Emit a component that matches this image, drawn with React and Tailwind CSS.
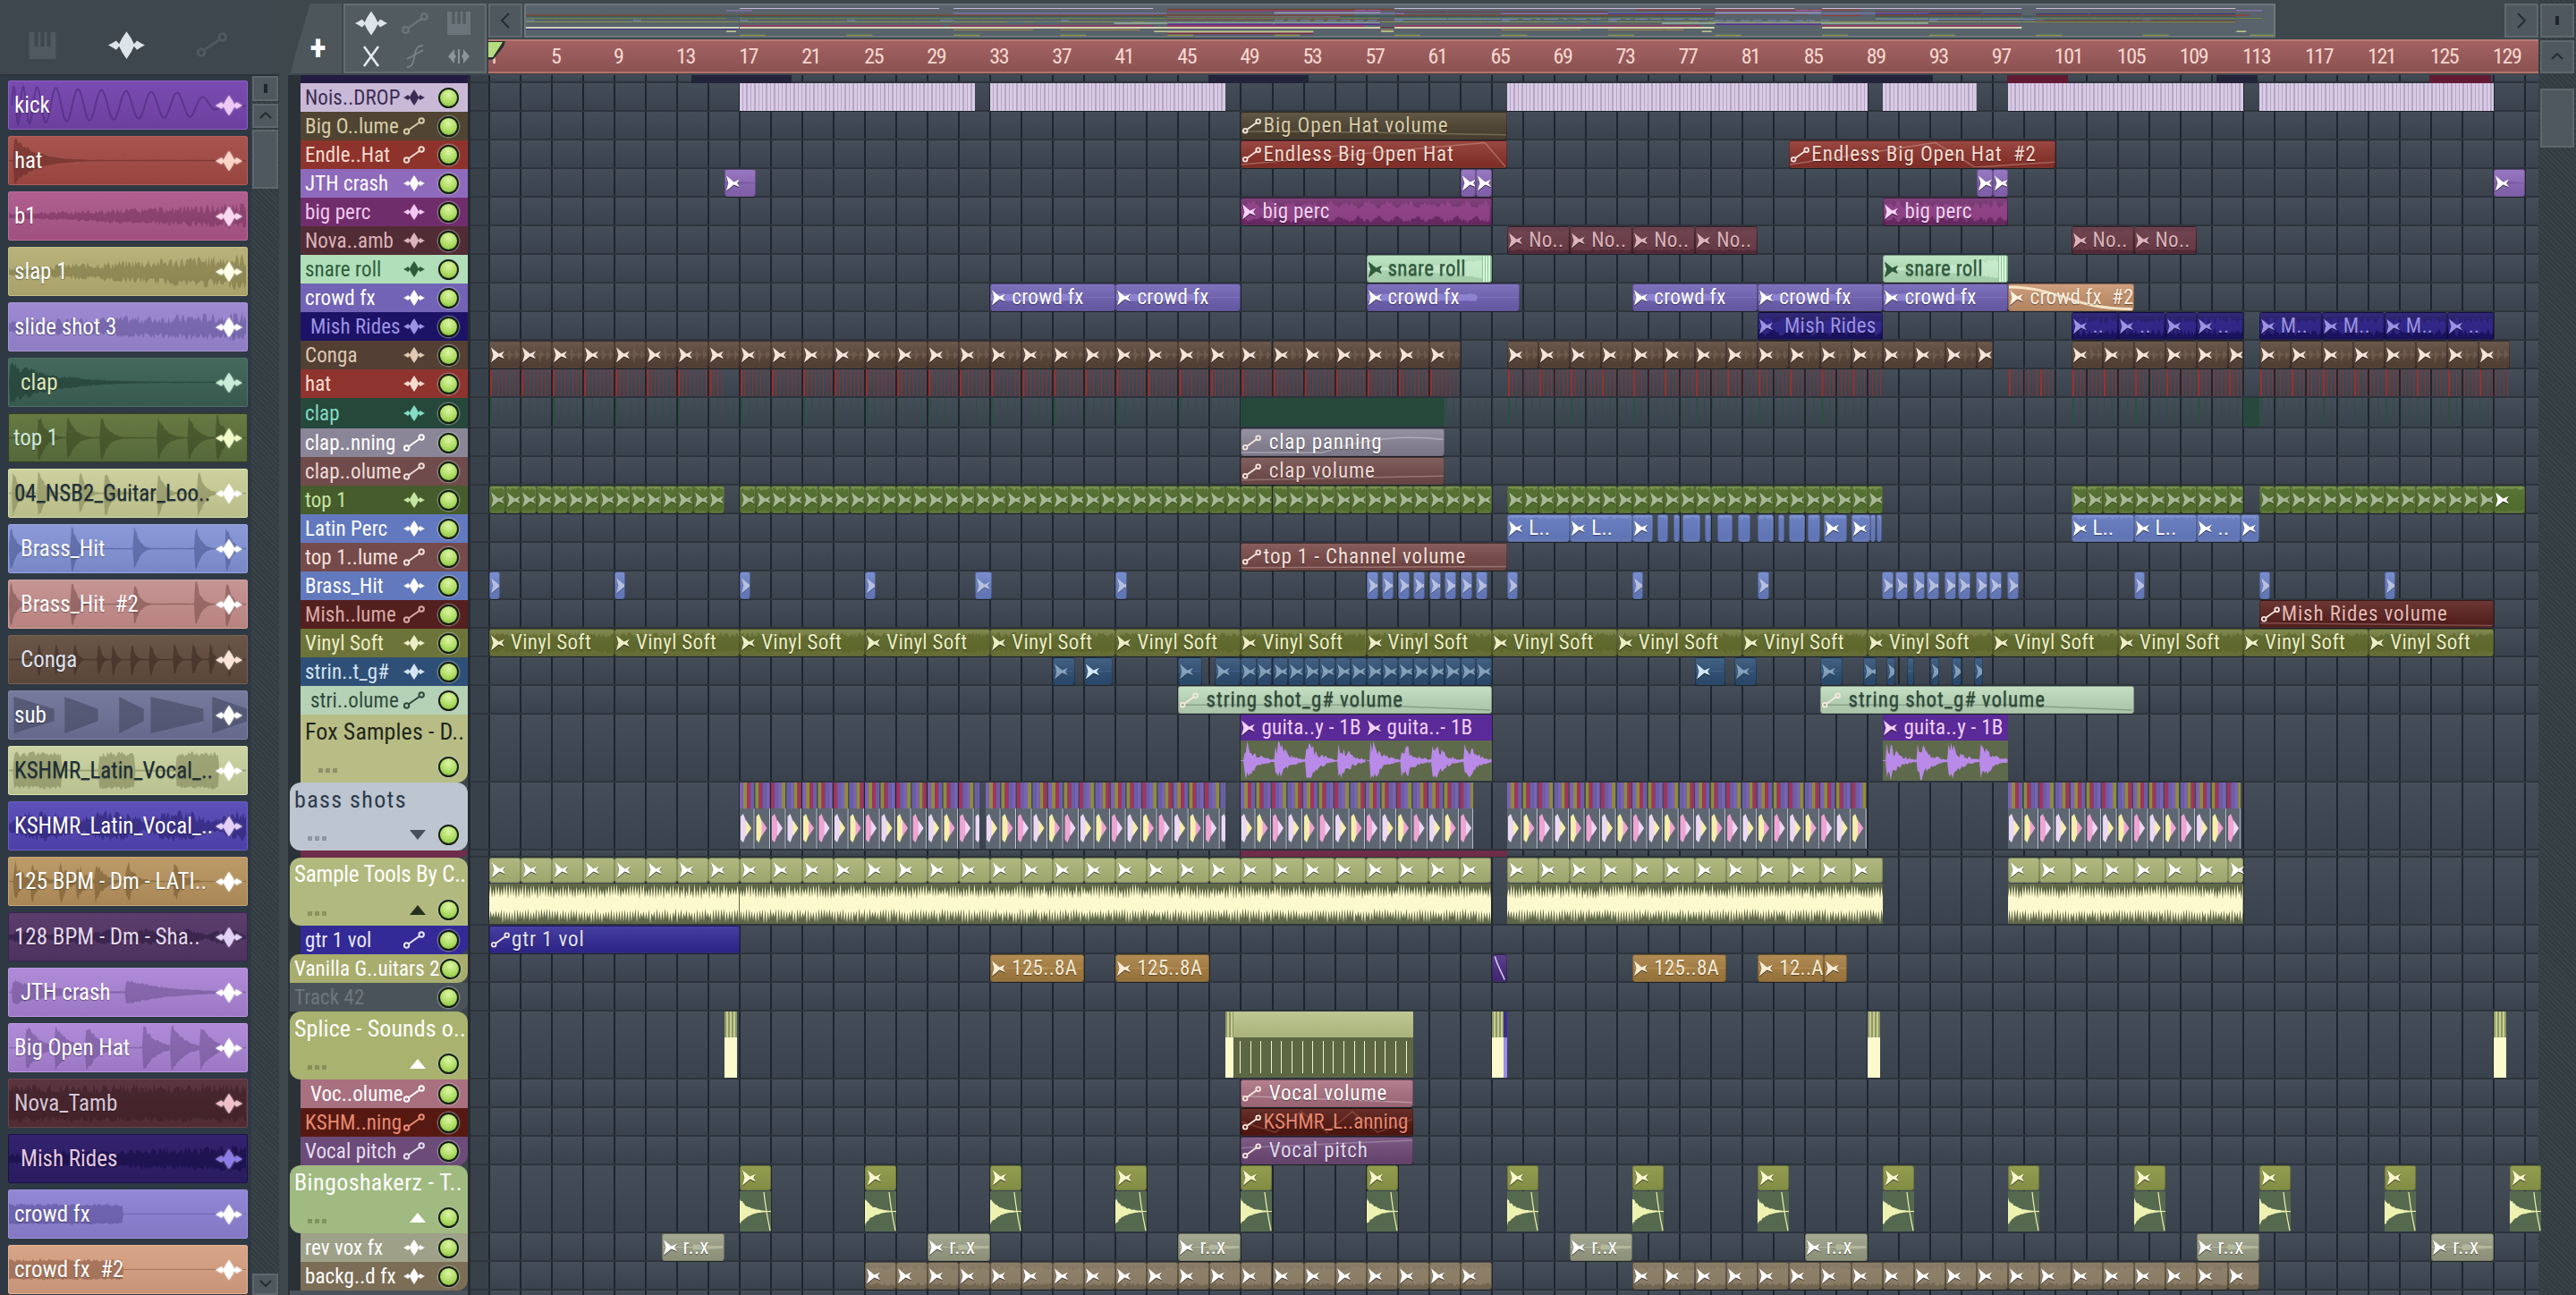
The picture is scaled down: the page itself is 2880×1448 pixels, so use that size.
// FL Studio style playlist window
import React from "react";

const BAR = 17.51;
const GRID =
  "bg-[repeating-linear-gradient(90deg,#1e252d_0,#1e252d_2px,transparent_2px,transparent_35.02px),linear-gradient(#444d58,#3a434d)]";

const rng = (seed) => {
  let s = seed * 9301 + 49297;
  return () => {
    s = (s * 9301 + 49297) % 233280;
    return s / 233280;
  };
};

const seq = (a, b, step, label) => {
  const out = [];
  for (let x = a; x < b; x += step) out.push([x, Math.min(x + step, b), label]);
  return out;
};

// envelope helpers for the little wave forms
const hits = (list, d = 0.05, amp = 1) => (t) => {
  let m = 0.03;
  for (const p of list) if (t >= p - 0.008) m = Math.max(m, amp * Math.exp(-Math.max(t - p, 0) / d));
  return Math.min(m, 1);
};
const flat = (amp) => () => amp;
const blob = (end, amp) => (t) => (t < end ? amp : 0.02);
// every other sample reaches for the edge, the rest stay in the solid middle
const spiky = (seed) => {
  const r = rng(seed);
  let i = 0;
  return () => {
    i += 1;
    return i % 4 < 2 ? 0.22 + 0.22 * r() : 0.68 + 0.32 * r();
  };
};

function wavePath(w, h, env, seed, step = 1.5, jag = 0.28) {
  const r = rng(seed);
  const top = [];
  const bot = [];
  for (let x = 0; x <= w; x += step) {
    const a = env(x / w) * (h / 2) * (1 - jag + jag * r());
    top.push(`${x.toFixed(1)} ${(h / 2 - a).toFixed(1)}`);
    const b = env(x / w) * (h / 2) * (1 - jag * 0.7 + jag * 0.7 * r());
    bot.unshift(`${x.toFixed(1)} ${(h / 2 + b).toFixed(1)}`);
  }
  return `M${top.join("L")}L${bot.join("L")}Z`;
}

function Wave({ w, h, env, seed, className, step, jag }) {
  return (
    <svg className={`absolute inset-0 h-full w-full ${className}`} viewBox={`0 0 ${w} ${h}`} preserveAspectRatio="none">
      <path d={wavePath(w, h, env, seed, step, jag)} fill="currentColor" />
    </svg>
  );
}

function WaveIcon({ className = "" }) {
  return (
    <svg className={className} viewBox="0 0 32 24" fill="currentColor">
      <path d="M0 12 3 10.5 7 8 9.5 11 12 6 16 0 20 6 22.5 11 25 8 29 10.5 32 12 29 13.5 25 16 22.5 13 20 18 16 24 12 18 9.5 13 7 16 3 13.5Z" />
    </svg>
  );
}

function NodeIcon({ className = "" }) {
  return (
    <svg className={className} viewBox="0 0 24 20" fill="none" stroke="currentColor" strokeWidth="2">
      <circle cx="3.6" cy="16" r="2.7" />
      <circle cx="20.2" cy="4" r="2.7" />
      <path d="M6 14.2 18 5.8" />
    </svg>
  );
}

function ClipIcon({ className = "" }) {
  return (
    <svg className={`h-[18px] w-[16px] shrink-0 drop-shadow-[0_1px_0_rgba(0,0,0,.6)] ${className}`} viewBox="0 0 15 16" fill="currentColor">
      <path d="M0 0 8 6.5 14 4 11.5 8 14 12 8 9.5 0 16 2.2 8Z" />
    </svg>
  );
}

function PianoIcon({ className = "" }) {
  return (
    <svg className={className} viewBox="0 0 30 30" fill="currentColor">
      <path d="M0 0H6V16H10V0H13V16H17V0H20V16H24V0H30V30H0Z" />
    </svg>
  );
}

function Led() {
  return (
    <div className="h-[23px] w-[23px] shrink-0 rounded-full border-2 border-[#161f12] bg-[radial-gradient(circle_at_50%_30%,#dcf5a4,#aedc62_55%,#79b23e)] shadow-[0_0_0_1.5px_rgba(190,200,190,.4)]" />
  );
}

const channels = [
  { name: "kick", pad: "pl-[6px]", bg: "from-[#7a4cb2] to-[#6c3f9e]", border: "border-[#8a62c0]", fg: "text-white", wv: "text-[#4a2a78]/60", icon: "text-[#f0c8f8]", kind: "sine" },
  { name: "hat", pad: "pl-[6px]", bg: "from-[#a85550] to-[#984540]", border: "border-[#b3605a]", fg: "text-white", wv: "text-[#5e2522]/50", icon: "text-[#fcd4c8]", env: hits([0.03], 0.09) },
  { name: "b1", pad: "pl-[6px]", bg: "from-[#b0608f] to-[#a0507e]", border: "border-[#bc6c9b]", fg: "text-white", wv: "text-[#6e2c55]/50", icon: "text-[#fcd8f0]", env: (t) => 0.12 + 0.45 * t, jag: 0.8 },
  { name: "slap 1", pad: "pl-[6px]", bg: "from-[#b9b27a] to-[#a8a169]", border: "border-[#c4bd85]", fg: "text-white", wv: "text-[#5e5a30]/40", icon: "text-[#fffce8]", env: (t) => 0.2 + 0.6 * t, jag: 0.8 },
  { name: "slide shot 3", pad: "pl-[6px]", bg: "from-[#9d8ad2] to-[#8e7cc4]", border: "border-[#a898da]", fg: "text-white", wv: "text-[#4c3f80]/40", icon: "text-white", env: (t) => 0.3 + 0.35 * t, jag: 0.8 },
  { name: "clap", pad: "pl-[13px]", bg: "from-[#44695c] to-[#38594e]", border: "border-[#4d7366]", fg: "text-[#dfe6b8]", wv: "text-[#1e3a32]/60", icon: "text-[#c8ecd8]", env: hits([0.01], 0.18), jag: 0.5 },
  { name: "top 1", pad: "pl-[5px]", bg: "from-[#677a43] to-[#55683a]", border: "border-[#33401f]", fg: "text-[#cfeadb]", wv: "text-[#333f1c]/50", icon: "text-[#f0fcc8]", env: hits([0.13, 0.25, 0.39, 0.63, 0.76, 0.88], 0.03) },
  { name: "04_NSB2_Guitar_Loo..", pad: "pl-[6px]", bg: "from-[#cdd19d] to-[#b9bd89]", border: "border-[#d8dcaa]", fg: "text-[#1f2f3a]", wv: "text-[#75784e]/50", icon: "text-white", env: hits([0.02, 0.13, 0.3, 0.41, 0.63, 0.8], 0.025) },
  { name: "Brass_Hit", pad: "pl-[13px]", bg: "from-[#8b99d9] to-[#7888c7]", border: "border-[#98a5e0]", fg: "text-white", wv: "text-[#404d85]/50", icon: "text-white", env: hits([0.01, 0.27, 0.53, 0.79, 0.92], 0.02) },
  { name: "Brass_Hit  #2", pad: "pl-[13px]", bg: "from-[#c59594] to-[#b8827f]", border: "border-[#d0a2a0]", fg: "text-white", wv: "text-[#6e4342]/50", icon: "text-white", env: hits([0.01, 0.27, 0.53, 0.79, 0.92], 0.02) },
  { name: "Conga", pad: "pl-[13px]", bg: "from-[#6a5548] to-[#5a463a]", border: "border-[#75604f]", fg: "text-[#dfe2ee]", wv: "text-[#33241c]/50", icon: "text-[#fce4d8]", env: hits([0.13, 0.2, 0.28, 0.38, 0.44, 0.52, 0.6, 0.7, 0.78, 0.85, 0.93], 0.012, 0.7) },
  { name: "sub", pad: "pl-[6px]", bg: "from-[#767b9d] to-[#66698c]", border: "border-[#8286a8]", fg: "text-white", wv: "text-[#444760]/60", icon: "text-white", kind: "sub" },
  { name: "KSHMR_Latin_Vocal_..", pad: "pl-[6px]", bg: "from-[#ccd4a4] to-[#b9c190]", border: "border-[#d6dcb0]", fg: "text-[#1d2e36]", wv: "text-[#75784e]/50", icon: "text-white", env: (t) => ((t > 0.02 && t < 0.22) || (t > 0.38 && t < 0.53) || (t > 0.7 && t < 0.88) ? 0.8 : 0.04) },
  { name: "KSHMR_Latin_Vocal_..", pad: "pl-[6px]", bg: "from-[#5d51b9] to-[#4c40a8]", border: "border-[#6a5ec4]", fg: "text-white", wv: "text-[#2a2070]/60", icon: "text-[#e2d0f8]", env: (t) => 0.25 + 0.45 * Math.abs(Math.sin(t * 11)), jag: 0.7 },
  { name: "125 BPM - Dm - LATI..", pad: "pl-[6px]", bg: "from-[#bc9b69] to-[#a88656]", border: "border-[#c7a676]", fg: "text-white", wv: "text-[#6a5028]/50", icon: "text-white", env: hits([0.03, 0.1, 0.22, 0.29, 0.37, 0.5, 0.7], 0.035, 0.95), jag: 0.6 },
  { name: "128 BPM - Dm - Sha..", pad: "pl-[6px]", bg: "from-[#5c3e6d] to-[#4d3260]", border: "border-[#3c2450]", fg: "text-[#e6d8ee]", wv: "text-[#2c1a40]/60", icon: "text-[#e2d0f8]", env: (t) => 0.1 + 0.25 * Math.abs(Math.sin(t * 19)), jag: 0.6 },
  { name: "JTH crash", pad: "pl-[13px]", bg: "from-[#b08bd9] to-[#9c78c4]", border: "border-[#bb98e0]", fg: "text-white", wv: "text-[#654a88]/50", icon: "text-white", env: hits([0.02, 0.5], 0.18, 0.55) },
  { name: "Big Open Hat", pad: "pl-[6px]", bg: "from-[#b08bd9] to-[#9c78c4]", border: "border-[#bb98e0]", fg: "text-white", wv: "text-[#654a88]/50", icon: "text-white", env: hits([0.08, 0.2, 0.33, 0.57, 0.69, 0.81], 0.05) },
  { name: "Nova_Tamb", pad: "pl-[6px]", bg: "from-[#5b3540] to-[#512b34]", border: "border-[#6a434e]", fg: "text-[#d8c6d8]", wv: "text-[#2e141a]/40", icon: "text-[#f0c0c8]", env: flat(0.82), jag: 0.5 },
  { name: "Mish Rides", pad: "pl-[13px]", bg: "from-[#33236f] to-[#2a1c60]", border: "border-[#1c1048]", fg: "text-[#e4c8e0]", wv: "text-[#180e48]/70", icon: "text-[#8c7ce8]", env: (t) => 0.25 + 0.35 * t, jag: 0.7 },
  { name: "crowd fx", pad: "pl-[6px]", bg: "from-[#9187d5] to-[#8478c4]", border: "border-[#9e95de]", fg: "text-white", wv: "text-[#4f4690]/50", icon: "text-white", env: blob(0.48, 0.45) },
  { name: "crowd fx  #2", pad: "pl-[6px]", bg: "from-[#d8a588] to-[#c89478]", border: "border-[#e4b295]", fg: "text-white", wv: "text-[#8a5a42]/60", icon: "text-white", env: blob(0.48, 0.45) },
];

function sinePath() {
  let d = "M2 27";
  let phase = 0;
  for (let x = 3; x <= 268; x += 1) {
    phase += 0.2 + 0.08 * Math.exp(-x / 100) + 0.6 * Math.exp(-x / 15);
    const amp = 22 * Math.exp(-x / 420) * (x > 205 ? Math.max(0.1, 1 - (x - 205) / 50) : 1);
    d += `L${x} ${(27 - amp * Math.sin(phase)).toFixed(1)}`;
  }
  return d;
}
function subPath() {
  const blocks = [[4, 50], [62, 100], [124, 152], [160, 220], [230, 270]];
  let d = "";
  blocks.forEach(([a, b]) => {
    d += `M${a} 6 L${b} 20 L${b} 34 L${a} 48Z`;
  });
  return d;
}

function ChannelCell({ c, i }) {
  return (
    <div className={`relative flex h-[55px] w-[268px] shrink-0 items-center overflow-hidden rounded-[2px] border bg-linear-to-b ${c.bg} ${c.border} ${c.pad}`}>
      {c.kind === "sine" && (
        <svg className={`absolute inset-0 h-full w-full ${c.wv}`} viewBox="0 0 268 54" fill="none" stroke="currentColor" strokeWidth="2">
          <path d={sinePath()} />
        </svg>
      )}
      {c.kind === "sub" && (
        <svg className={`absolute inset-0 h-full w-full ${c.wv}`} viewBox="0 0 268 54" fill="currentColor">
          <path d={subPath()} />
        </svg>
      )}
      {c.env && <Wave w={268} h={54} env={c.env} seed={i + 3} className={c.wv} jag={c.jag} />}
      <span className={`relative whitespace-pre text-[25px] leading-none [text-shadow:0_1px_1px_rgba(0,0,0,.35)] ${c.fg}`}>{c.name}</span>
      <WaveIcon className={`absolute right-[5px] top-[15px] h-[24px] w-[30px] drop-shadow-[0_0_1px_rgba(255,255,255,.6)] ${c.icon}`} />
    </div>
  );
}

const LATIN = [[66, 70, "L.."], [70, 74, "L.."], [74, 75.3], [75.6, 76.3], [76.6, 77], [77.2, 78.3], [78.6, 79], [79.4, 80.4], [80.7, 81.5], [82, 83], [83.3, 83.7], [84, 85], [85.2, 86], [86.2, 87.7], [88, 89.2], [89.2, 89.5], [89.6, 89.9], [102, 106, "L.."], [106, 110, "L.."], [110, 112.8, ".."], [112.8, 114]];
const BRASS = [[1, 1.7], [9, 9.7], [17, 17.7], [25, 25.7], [32, 33.1], [41, 41.7], ...seq(57, 65, 1).map(([a]) => [a, a + 0.75]), [66, 66.7], [74, 74.7], [82, 82.7], ...[89.9, 90.8, 91.9, 92.8, 93.9, 94.8, 95.9, 96.8, 97.9].map((a) => [a, a + 0.75]), [106, 106.7], [114, 114.7], [122, 122.7]];

const tracks = [
  { h: 9, name: "", bg: "bg-[#221d40]", kind: "sliver", ov: "#2a2a4a" },
  { h: 32, name: "Nois..DROP", bg: "bg-[#c9b9d7]", fg: "text-[#3a2c52]", kind: "stripe", ov: "#c9b9d7", clips: [[17, 32], [33, 48], [66, 89], [90, 96], [98, 113], [114, 129]] },
  { h: 32, name: "Big O..lume", node: 1, bg: "bg-[#4f4532]", fg: "text-[#d9cca8]", clip: "bg-[#4f4532]", cfg: "text-[#d9cca8]", ov: "#4f4532", clips: [[49, 66, "Big Open Hat volume", "M0 72 L20 72 L100 85"]] },
  { h: 32, name: "Endle..Hat", node: 1, bg: "bg-[#8e332c]", fg: "text-[#f4dbcf]", clip: "bg-[#8e332c]", cfg: "text-[#f4dbcf]", ov: "#a03a32", clips: [[49, 66, "Endless Big Open Hat", "M0 90 L92 5 L100 100"], [84, 101, "Endless Big Open Hat  #2", "M0 90 L55 5 L70 100 L100 80"]] },
  { h: 32, name: "JTH crash", bg: "bg-[#8e6abc]", fg: "text-white", clip: "bg-[#8e6abc]", cfg: "text-white", wv: "text-[#6a4a94]/50", env: hits([0.05], 0.4, 0.35), ov: "#9b78c8", clips: [[16, 18], [63, 64], [64, 65], [96, 97], [97, 98], [129, 131]] },
  { h: 32, name: "big perc", bg: "bg-[#702d6b]", fg: "text-[#f2c8f2]", clip: "bg-[#702d6b]", cfg: "text-[#f7d4f7]", wv: "text-[#9a4a92]/70", env: (t) => 0.4 + 0.5 * Math.abs(Math.sin(t * 40)), jag: 0.5, ov: "#8a3a84", clips: [[49, 65, "big perc"], [90, 98, "big perc"]] },
  { h: 32, name: "Nova..amb", bg: "bg-[#512c35]", fg: "text-[#dcb3ba]", clip: "bg-[#5a2f3b]", cfg: "text-[#dcb3ba]", wv: "text-[#7a4a56]/50", env: flat(0.85), ov: "#6e3a48", clips: [...seq(66, 82, 4, "No.."), ...seq(102, 110, 4, "No..")] },
  { h: 32, name: "snare roll", bg: "bg-[#b1dfb9]", fg: "text-[#2e5b3c]", clip: "bg-[#b5e3bd]", cfg: "text-[#2e5b3c]", wv: "text-[#d4f4d8]/60", env: (t) => 0.1 + 0.8 * t * t, ov: "#b1dfb9", clips: [[57, 65, "snare roll"], [90, 98, "snare roll"]], endStripe: 1 },
  { h: 32, name: "crowd fx", bg: "bg-[#7263b6]", fg: "text-white", clip: "bg-[#7263b6]", cfg: "text-white", wv: "text-[#9a8ee0]/70", env: blob(0.72, 0.3), ov: "#8a7cd0", clips: [[33, 41, "crowd fx"], [41, 49, "crowd fx"], [57, 66.8, "crowd fx"], [74, 82, "crowd fx"], [82, 90, "crowd fx"], [90, 98, "crowd fx"], [98, 106, "crowd fx  #2", null, 1]] },
  { h: 32, name: "Mish Rides", pad: "pl-[11px]", bg: "bg-[#1c1367]", fg: "text-[#9c92e4]", clip: "bg-[#1c1367]", cfg: "text-[#9c92e4]", wv: "text-[#352a90]/80", env: (t) => 0.3 + 0.5 * Math.abs(Math.sin(t * 25)), jag: 0.6, ov: "#2a2090", clips: [[82, 90, " Mish Rides"], [102, 105, ".."], [105, 108, ".."], [108, 110], [110, 113, ".."], [114, 118, "M.."], [118, 122, "M.."], [122, 126, "M.."], [126, 129, ".."]] },
  { h: 32, name: "Conga", bg: "bg-[#533f33]", fg: "text-[#dfc9b4]", clip: "bg-[#5a463a]", cfg: "text-[#f6e4d8]", wv: "text-[#7a6656]/60", env: hits([0.15, 0.4, 0.62, 0.85], 0.06, 0.8), jag: 0.6, ov: "#6a5548", clips: [...seq(1, 63, 2), ...seq(66, 96, 2), [96, 97], ...seq(102, 112, 2), [112, 113], ...seq(114, 130, 2)] },
  { h: 32, name: "hat", bg: "bg-[#8e332e]", fg: "text-[#f8dcd0]", kind: "lines", lineColor: "#a22f2a", gap: 4.38, ov: "#a03a32", clips: [[1, 16], [17, 63], [66, 90], [98, 101], [102, 113], [114, 130]] },
  { h: 34, name: "clap", bg: "bg-[#25483b]", fg: "text-[#84dcc4]", kind: "lines", lineColor: "#27543f", gap: 8.76, ov: "#2e5a46", clips: [[1, 49], [49, 62, null, "solid"], [62, 90], [102, 113], [113, 114, null, "solid"], [114, 129]] },
  { h: 32, name: "clap..nning", node: 1, bg: "bg-[#8b8697]", fg: "text-white", clip: "bg-[#8b8697]", cfg: "text-white", ov: "#8b8697", clips: [[49, 62, " clap panning", "M0 90 L40 90 Q70 10 100 40"]] },
  { h: 32, name: "clap..olume", node: 1, bg: "bg-[#6f4b4b]", fg: "text-[#f0dcd8]", clip: "bg-[#754e4e]", cfg: "text-[#f0dcd8]", ov: "#754e4e", clips: [[49, 62, " clap volume", "M0 85 L100 70"]] },
  { h: 32, name: "top 1", bg: "bg-[#465c2c]", fg: "text-[#c6e4a4]", clip: "bg-[#6a8640]", cfg: "text-white", wv: "text-[#4a6828]/70", env: flat(0.95), faint: 1, ov: "#6a8640", clips: [...seq(1, 16, 1), ...seq(17, 65, 1), ...seq(66, 90, 1), ...seq(102, 113, 1), ...seq(114, 129, 1), [129, 131]] },
  { h: 32, name: "Latin Perc", bg: "bg-[#6279bf]", fg: "text-white", clip: "bg-[#7287cb]", cfg: "text-white", wv: "text-[#5a70b4]/50", env: flat(0.9), iconMin: 20.5, ov: "#7287cb", clips: LATIN },
  { h: 32, name: "top 1..lume", node: 1, bg: "bg-[#754a4a]", fg: "text-[#f4e0dc]", clip: "bg-[#7a4c4a]", cfg: "text-[#f4e0dc]", ov: "#7a4c4a", clips: [[49, 66, "top 1 - Channel volume", "M0 92 L100 88"]] },
  { h: 32, name: "Brass_Hit", bg: "bg-[#6279bd]", fg: "text-white", clip: "bg-[#6c82c8]", cfg: "text-white", faint: 1, ov: "#7287cb", clips: BRASS },
  { h: 32, name: "Mish..lume", node: 1, bg: "bg-[#54201f]", fg: "text-[#d8aaa8]", clip: "bg-[#5c2320]", cfg: "text-[#e6bab4]", ov: "#6a2a28", clips: [[114, 129, "Mish Rides volume", "M0 85 L100 95"]] },
  { h: 32, name: "Vinyl Soft", bg: "bg-[#6d743a]", fg: "text-[#eceec4]", clip: "bg-[#727b3c]", cfg: "text-[#eceec4]", wv: "text-[#5a6428]/70", env: flat(0.8), jag: 0.5, ov: "#8d964e", clips: seq(1, 129, 8, "Vinyl Soft") },
  { h: 32, name: "strin..t_g#", bg: "bg-[#2f5076]", fg: "text-[#d4e4f4]", clip: "bg-[#2f5076]", cfg: "text-[#cfe8f8]", wv: "text-[#4a6c98]/60", env: hits([0.02], 0.35, 0.2), faint: 1, ov: "#3f6490", clips: [[37, 38.4], [39, 40.8], [45, 46.5], [47.3, 49], ...seq(49, 65, 1), [78, 79.9], [80.5, 81.9], [86, 87.4], [88.7, 89.6], [90.2, 90.8], [91.5, 92], [93, 93.6], [94.4, 95], [95.8, 96.4]] },
  { h: 32, name: "stri..olume", node: 1, pad: "pl-[11px]", bg: "bg-[#b5d1b6]", fg: "text-[#2e4b3a]", clip: "bg-[#bfdcbe]", cfg: "text-[#2e4b3a]", ov: "#bfdcbe", clips: [[45, 65, " string shot_g# volume", "M0 70 L60 70 L100 90"], [86, 106, " string shot_g# volume", "M0 70 L60 70 L100 90"]] },
  { h: 76, name: "Fox Samples - D..", group: 0, tall: "guitar", bg: "bg-[#b8bd86]", fg: "text-[#1f2618]", shape: "rounded-br-[12px]", dots: "bg-[#8d926a]", ov: "#5a2a98", clips: [[49, 57, "guita..y - 1B"], [57, 65, "guita..- 1B"], [90, 98, "guita..y - 1B"]] },
  { h: 76, name: "bass shots", group: 1, tall: "bass", tri: "down", title: "text-[26px] tracking-[1.4px]", bg: "bg-[#bcc5d0]", fg: "text-[#2d3a4b]", shape: "rounded-[12px]", dots: "bg-[#8f97a2]", triC: "border-t-[#44505c]", ov: "#a2345e", clips: [[17, 32.3], [32.7, 48], [49, 63.8], [66, 89], [98, 112.8]] },
  { h: 8, name: "", bg: "bg-[#6e2d49]", shape: "rounded-br-[8px]", clip: "bg-[#6e2d49]", ov: "#6e2d49", clips: [[49, 66]], thin: 1 },
  { h: 76, name: "Sample Tools By C..", group: 1, tall: "sample", tri: "up", title: "text-[25px] tracking-[-0.2px]", bg: "bg-[#b2b97e]", fg: "text-white", shape: "rounded-t-[12px] rounded-bl-[12px]", dots: "bg-[#8c9360]", triC: "border-b-[#26301e]", ov: "#fbf8c8", clips: [[1, 17], [17, 65], [66, 90], [98, 113]] },
  { h: 32, name: "gtr 1 vol", node: 1, bg: "bg-[#332a97]", fg: "text-[#e8e8f4]", shape: "rounded-br-[10px]", clip: "bg-[#332a97]", cfg: "text-[#e4e4f4]", ov: "#332a97", clips: [[1, 17, "gtr 1 vol"]] },
  { h: 32, name: "Vanilla G..uitars 2", group: 1, bg: "bg-[#a8ad6d]", fg: "text-white", shape: "rounded-tl-[10px] rounded-br-[12px]", clip: "bg-[#a87f42]", cfg: "text-[#f8ecd4]", wv: "text-[#c49e64]/60", env: hits([0.4], 0.1, 0.7), ov: "#b08848", clips: [[33, 39, "125..8A"], [41, 47, "125..8A"], [65, 66, null, null, 2], [74, 80, "125..8A"], [82, 86.2, "12..A"], [86.2, 87.7]] },
  { h: 32, name: "Track 42", group: 1, bg: "bg-[#4b535a]", fg: "text-[#6d777d]", shape: "rounded-br-[12px]", clips: [] },
  { h: 76, name: "Splice - Sounds o..", group: 1, tall: "splice", tri: "up", bg: "bg-[#a9b26f]", fg: "text-white", shape: "rounded-t-[12px] rounded-bl-[12px]", dots: "bg-[#85905a]", triC: "border-b-white", ov: "#c6cc94", clips: [[16, 16.8], [48, 60], [65, 66], [89, 89.8], [129, 129.8]] },
  { h: 32, name: "Voc..olume", node: 1, pad: "pl-[11px]", bg: "bg-[#a9707f]", fg: "text-white", clip: "bg-[#ad7282]", cfg: "text-white", ov: "#ad7282", clips: [[49, 60, " Vocal volume", "M0 60 L100 85"]] },
  { h: 32, name: "KSHM..ning", node: 1, tight: 1, bg: "bg-[#561912]", fg: "text-[#e88a72]", clip: "bg-[#561912]", cfg: "text-[#e78870]", ov: "#7a2a22", clips: [[49, 60, "KSHMR_L..anning", "M0 50 L20 90 L35 10 L50 90 L65 10 L80 90 L100 40"]] },
  { h: 32, name: "Vocal pitch", node: 1, bg: "bg-[#6c4b79]", fg: "text-[#e6dcf0]", shape: "rounded-br-[12px]", clip: "bg-[#704b78]", cfg: "text-[#e2d8f0]", ov: "#704b78", clips: [[49, 60, " Vocal pitch", "M0 40 L100 10"]] },
  { h: 76, name: "Bingoshakerz - T..", group: 1, tall: "bingo", tri: "up", title: "text-[26px] tracking-[0.4px]", bg: "bg-[#a0ba81]", fg: "text-white", shape: "rounded-t-[12px] rounded-bl-[12px]", dots: "bg-[#7c9660]", triC: "border-b-white", ov: "#8a9448", clips: [17, 25, 33, 41, 49, 57, 66, 74, 82, 90, 98, 106, 114, 122, 130].map((a) => [a, a + 2]) },
  { h: 32, name: "rev vox fx", bg: "bg-[#9ea188]", fg: "text-white", clip: "bg-[#9da288]", cfg: "text-white", wv: "text-[#c0c6a8]/70", env: hits([0.5], 0.5, 0.25), ov: "#9da288", clips: [[12, 16], [29, 33], [45, 49], [70, 74], [85, 89], [110, 114], [125, 129]].map(([a, b]) => [a, b, "r..x"]) },
  { h: 32, name: "backg..d fx", bg: "bg-[#7b6d56]", fg: "text-white", shape: "rounded-br-[12px]", clip: "bg-[#7e7059]", cfg: "text-white", wv: "text-[#93856c]/70", env: flat(0.8), jag: 0.5, ov: "#8d8068", clips: [...seq(25, 65, 2), ...seq(74, 114, 2)] },
  { h: 32, name: "", group: 1, bg: "bg-[#4b535a]", clips: [] },
];

const HEIGHT = { 8: "h-2", 9: "h-[9px]", 32: "h-8", 34: "h-[34px]", 76: "h-[76px]" };
const barX = (a) => 1 + (a - 1) * BAR;
const SLIVERS = [
  [13.9, 20.3, "bg-[#23233a]"],
  [46.9, 53.3, "bg-[#23233a]"],
  [86.8, 93.2, "bg-[#23233a]"],
  [97.9, 101.8, "bg-[#621b33]"],
  [111.3, 113.9, "bg-[#23233a]"],
  [124.9, 128.8, "bg-[#621b33]"],
];

function AudioClip({ t, c, idx }) {
  const [a, b, label, curve, mode] = c;
  const width = (b - a) * BAR;
  const isCrowd2 = mode === 1;
  const showIcon = width > (t.iconMin || 10) && mode !== 2;
  return (
    <div
      className={`absolute top-0 flex h-[31px] items-center overflow-hidden rounded-[3px] border border-black/25 bg-linear-to-b from-white/10 to-black/10 pl-[1px] shadow-[0_1px_0_#1b2128] ${isCrowd2 ? "bg-[#c9956f] text-[#fff0e0]" : mode === 2 ? "bg-[#4a2c80] text-[#d0c0f0]" : `${t.clip} ${t.cfg}`}`}
      style={{ left: barX(a), width }}
    >
      {t.env && !isCrowd2 && mode !== 2 && <Wave w={Math.ceil(width)} h={30} env={t.env} seed={idx + 11} className={t.wv} jag={t.jag} />}
      {t.node && curve && (
        <svg className="absolute inset-0 h-full w-full" viewBox="0 0 100 100" preserveAspectRatio="none" fill="none">
          <path d={curve} stroke="currentColor" strokeOpacity=".3" strokeWidth="1.5" vectorEffect="non-scaling-stroke" />
        </svg>
      )}
      {isCrowd2 && (
        <svg className="absolute inset-0 h-full w-full" viewBox="0 0 100 100" preserveAspectRatio="none" fill="none">
          <path d="M0 10 C40 10 50 95 100 95" stroke="#f4e4c8" strokeWidth="3" vectorEffect="non-scaling-stroke" />
        </svg>
      )}
      {mode === 2 && (
        <svg className="absolute inset-0 h-full w-full" viewBox="0 0 100 100" preserveAspectRatio="none" fill="none">
          <path d="M15 5 C35 45 60 60 85 95" stroke="#d8d0f0" strokeWidth="1.5" vectorEffect="non-scaling-stroke" />
        </svg>
      )}
      {t.endStripe && (
        <div className="absolute inset-y-0 right-0 w-[10px] bg-[repeating-linear-gradient(90deg,#8fc69a_0,#8fc69a_1px,#d8f8dc_1px,#d8f8dc_3px)]" />
      )}
      {t.node ? (
        <NodeIcon className="relative h-[18px] w-[21px] shrink-0 text-[#f6e8e0]" />
      ) : showIcon ? (
        <ClipIcon className={t.faint && width < 30 ? "relative opacity-50" : "relative"} />
      ) : null}
      {label && (
        <span className={`relative whitespace-pre text-[23px] leading-none [text-shadow:0_1px_1px_rgba(0,0,0,.45)] ${t.tight ? "pl-[2px]" : t.node ? "pl-[2px] tracking-[0.9px]" : "pl-[6px] tracking-[0.3px]"}`}>{label}</span>
      )}
    </div>
  );
}

function StripeClip({ c }) {
  const [a, b] = c;
  return (
    <div
      className="absolute top-0 h-[31px] bg-[repeating-linear-gradient(90deg,#d9cbe4_0,#d9cbe4_3px,#b6a6c6_3px,#b6a6c6_4.4px)] shadow-[0_1px_0_#1b2128]"
      style={{ left: barX(a), width: (b - a) * BAR }}
    />
  );
}

function LineClip({ t, c, idx }) {
  const [a, b, , mode] = c;
  const width = (b - a) * BAR;
  if (mode === "solid") {
    return <div className="absolute top-0 h-[32px] bg-[#27493c]" style={{ left: barX(a), width }} />;
  }
  const r = rng(idx + 4);
  const lines = [];
  for (let x = 1; x < width; x += t.gap) {
    const strong = Math.round(x / t.gap) % 8 === 0;
    lines.push(
      <rect key={x} x={x} y="0" width={strong ? 2 : 1} height={t.h - 2} fill={t.lineColor} opacity={strong ? 1 : 0.45 + 0.5 * r()} />
    );
  }
  return (
    <svg className="absolute top-0 h-[30px]" style={{ left: barX(a), width }} viewBox={`0 0 ${width} ${t.h - 2}`} preserveAspectRatio="none">
      {lines}
    </svg>
  );
}

// tall rows: clip header with the wave form opened out below it
function GuitarClip({ c, idx }) {
  const [a, b, label] = c;
  return (
    <div className="absolute top-0 flex h-[74px] flex-col" style={{ left: barX(a), width: (b - a) * BAR }}>
      <div className="flex h-[29px] items-center overflow-hidden bg-[#5a2a98] pl-[1px] text-[#f2d0f8] shadow-[0_1px_0_#1b2128]">
        <ClipIcon />
        <span className="whitespace-pre pl-[6px] text-[23px] leading-none tracking-[0.3px]">{label}</span>
      </div>
      <div className="relative h-[45px] bg-[#5f6a4d]">
        <Wave w={Math.round((b - a) * BAR)} h={45} env={hits([0.03, 0.28, 0.53, 0.78], 0.08, 1.5)} seed={idx + 20} step={1.5} jag={0.7} className="text-[#b98ae8]" />
      </div>
    </div>
  );
}

function BassRange({ c }) {
  const [a, b] = c;
  const width = (b - a) * BAR;
  const colors = ["#7b63b5", "#8f8c3f", "#a2345e", "#6a5fa8"];
  const waves = ["#ecd8f4", "#f7eeaa", "#f0a4d4"];
  const items = [];
  let n = 0;
  for (let x = 0; x < width - 2; x += BAR, n++) {
    const w = Math.min(BAR - 2, width - x);
    items.push(
      <g key={x}>
        {colors.map((col, i) => (
          <rect key={i} x={x + i * 4} y="0" width="4" height="29" fill={colors[(i + n) % 4]} />
        ))}
        <rect x={x} y="29" width={w} height="45" fill="#5e6771" />
        <path d={`M${x + 1} 38 L${x + 4} 35 L${x + 10} 51 L${x + 4} 67 L${x + 1} 64Z`} fill={waves[n % 3]} />
        <path d={`M${x + 7} 42 L${x + 13} 51 L${x + 7} 60Z`} fill={waves[(n + 1) % 3]} />
        <rect x={x + w} y="29" width="1" height="45" fill="#c8ccd8" />
      </g>
    );
  }
  return (
    <svg className="absolute top-0 h-[74px]" style={{ left: barX(a), width }} viewBox={`0 0 ${width} 74`}>
      {items}
    </svg>
  );
}

function SampleRange({ c, idx }) {
  const [a, b] = c;
  const width = Math.round((b - a) * BAR);
  return (
    <div className="absolute top-0 h-[74px]" style={{ left: barX(a), width }}>
      <div className="flex h-[29px]">
        {seq(a, b, 2).map(([x, y]) => (
          <div key={x} className="flex h-[28px] items-center rounded-[3px] border border-black/20 bg-linear-to-b from-[#b0b880] to-[#9ca56c] pl-[2px] text-white" style={{ width: (y - x) * BAR }}>
            <ClipIcon />
          </div>
        ))}
      </div>
      <div className="relative h-[45px] bg-[#5f6749]">
        <Wave w={width} h={45} env={spiky(idx + 5)} seed={idx + 31} step={1.5} jag={0} className="text-[#fcf9cc]" />
      </div>
    </div>
  );
}

function SpliceClip({ c }) {
  const [a, b] = c;
  const big = b - a > 5;
  const lines = [];
  for (let x = 16; big && x < (b - a) * BAR; x += 11.6) lines.push(x);
  return (
    <div className="absolute top-0 h-[74px]" style={{ left: barX(a), width: (b - a) * BAR }}>
      {big ? (
        <>
          <div className="flex h-[29px]">
            <div className="h-full w-[9px] bg-[repeating-linear-gradient(90deg,#8f9862_0,#8f9862_2px,#c6cc94_2px,#c6cc94_4px)]" />
            <div className="h-full flex-1 bg-linear-to-b from-[#c0c792] to-[#a9b27a]" />
          </div>
          <div className="relative flex h-[45px] bg-[#5d6743]">
            <div className="h-full w-[9px] bg-[#fcf9cc]" />
            {lines.map((x) => (
              <div key={x} className="absolute top-[4px] h-[36px] w-[1px] bg-[#f4f2cc]" style={{ left: x }} />
            ))}
          </div>
        </>
      ) : (
        <>
          <div className="flex h-[29px]">
            <div className="h-full flex-1 bg-[repeating-linear-gradient(90deg,#8f9862_0,#8f9862_2px,#c6cc94_2px,#c6cc94_4px)]" />
            {a === 65 && <div className="h-full w-[4px] bg-[#3c2c96]" />}
          </div>
          <div className="flex h-[45px]">
            <div className="h-full flex-1 bg-[#fcf9cc]" />
            {a === 65 && <div className="h-full w-[4px] bg-[#9c8cf0]" />}
          </div>
        </>
      )}
    </div>
  );
}

function BingoClip({ c, idx }) {
  const [a, b] = c;
  const width = (b - a) * BAR;
  return (
    <div className="absolute top-0 h-[74px]" style={{ left: barX(a), width }}>
      <div className="flex h-[28px] items-center rounded-[3px] border border-black/20 bg-linear-to-b from-[#939d50] to-[#828c44] pl-[2px] text-[#fbf8d0]">
        <ClipIcon />
      </div>
      <div className="relative mt-[1px] h-[45px] bg-[#55694f]">
        <Wave w={Math.round(width)} h={45} env={hits([0], 0.28, 0.72)} seed={idx + 7} className="text-[#eef2b0]" step={1} />
        <svg className="absolute inset-0 h-full w-full" viewBox="0 0 35 45" fill="none">
          <path d="M27 1 C29 20 31 30 34 44" stroke="#eef2b0" strokeWidth="1.2" />
        </svg>
      </div>
    </div>
  );
}

function RowClips({ t }) {
  if (t.kind === "sliver") {
    return SLIVERS.map(([a, b, cls]) => <div key={a} className={`absolute top-0 h-[9px] ${cls}`} style={{ left: barX(a), width: (b - a) * BAR }} />);
  }
  if (t.thin) return <div className="absolute top-0 h-[7px] bg-[#6e2d49]" style={{ left: barX(49), width: 17 * BAR }} />;
  return (t.clips || []).map((c, i) => {
    if (t.kind === "stripe") return <StripeClip key={i} c={c} />;
    if (t.kind === "lines") return <LineClip key={i} t={t} c={c} idx={i} />;
    if (t.tall === "guitar") return <GuitarClip key={i} c={c} idx={i} />;
    if (t.tall === "bass") return <BassRange key={i} c={c} />;
    if (t.tall === "sample") return <SampleRange key={i} c={c} idx={i} />;
    if (t.tall === "splice") return <SpliceClip key={i} c={c} />;
    if (t.tall === "bingo") return <BingoClip key={i} c={c} idx={i} />;
    return <AudioClip key={i} t={t} c={c} idx={i} />;
  });
}

function TrackName({ t }) {
  const left = t.group ? "-ml-[12px] w-[199px]" : "w-[187px]";
  const base = `relative z-10 shrink-0 ${left} ${t.bg} ${t.fg || ""} ${t.shape || ""}`;
  if (t.h === 76) {
    return (
      <div className={`flex flex-col justify-between pb-[6px] pl-[5px] pr-[10px] pt-[6px] ${base}`}>
        <span className={`whitespace-pre leading-none ${t.title || "text-[26px] tracking-[0.1px]"}`}>{t.name}</span>
        <div className="flex items-center justify-end">
          <div className="mr-auto ml-[15px] mt-[8px] flex gap-[3px]">
            <span className={`h-[5px] w-[5px] ${t.dots}`} />
            <span className={`h-[5px] w-[5px] ${t.dots}`} />
            <span className={`h-[5px] w-[5px] ${t.dots}`} />
          </div>
          {t.tri === "down" && <div className={`mr-[14px] h-0 w-0 border-x-[9px] border-t-[11px] border-x-transparent ${t.triC}`} />}
          {t.tri === "up" && <div className={`mr-[14px] h-0 w-0 border-x-[9px] border-b-[11px] border-x-transparent ${t.triC}`} />}
          <Led />
        </div>
      </div>
    );
  }
  if (!t.name) return <div className={base} />;
  return (
    <div className={`flex items-center pr-[10px] ${t.pad || "pl-[5px]"} ${base}`}>
      <span className="flex-1 whitespace-pre text-[23px] leading-none tracking-[0.1px]">{t.name}</span>
      {!t.group && (t.node ? <NodeIcon className="mr-[15px] h-[20px] w-[24px] shrink-0" /> : <WaveIcon className="mr-[15px] h-[20px] w-[24px] shrink-0" />)}
      <Led />
    </div>
  );
}

function TrackRow({ t }) {
  return (
    <div className={`flex shrink-0 ${HEIGHT[t.h]}`}>
      <div className="w-[14px] shrink-0 bg-[#2a3238]" />
      <TrackName t={t} />
      <div className="w-[3px] shrink-0 bg-[#252c32]" />
      <div className="w-[20px] shrink-0 border-b-2 border-[#2d343c] bg-[#38414a]" />
      <div className={`relative flex-1 border-b-2 border-[#2d343c] ${GRID}`}>
        <RowClips t={t} />
      </div>
    </div>
  );
}

function Overview() {
  let y = 84;
  const rects = [];
  tracks.forEach((t, ti) => {
    const py = 3 + (y - 93) * 0.0245;
    (t.clips || []).forEach((c, i) => {
      if (typeof c[0] === "number" && t.ov && c[1] > c[0]) {
        rects.push(<rect key={`${ti}-${i}`} x={(c[0] - 1) * 14.94} y={py} width={(c[1] - c[0]) * 14.94 - 1} height={t.h === 76 ? 1.5 : 1} fill={t.ov} />);
      }
    });
    y += t.h;
  });
  return (
    <svg className="h-[38px] w-[1958px] border-2 border-[#6c777d] bg-[#58636b]" viewBox="0 0 1954 34">
      {rects}
    </svg>
  );
}

function ArrowButton({ dir, className = "" }) {
  return (
    <div className={`flex items-center justify-center border-2 border-[#5d676d] bg-[#4e585e] ${className}`}>
      <svg className="h-[18px] w-[14px]" viewBox="0 0 14 18" fill="none" stroke="#232b30" strokeWidth="1.8">
        <path d={dir === "left" ? "M11 1 3 9l8 8" : dir === "right" ? "M3 1l8 8-8 8" : dir === "up" ? "M1 11l6-6 6 6" : "M1 5l6 6 6-6"} />
      </svg>
    </div>
  );
}

function DotButton({ className = "" }) {
  return (
    <div className={`flex items-center justify-center border-2 border-[#5d676d] bg-[#4e585e] ${className}`}>
      <div className="h-[10px] w-[4px] bg-[#1f272c]" />
    </div>
  );
}

function Ruler() {
  const labels = [];
  for (let b = 1; b <= 129; b += 4) labels.push(b);
  return (
    <div className="relative flex h-[38px] items-center overflow-hidden border-y-2 border-t-[#b57a74] border-b-[#b5726a] bg-linear-to-b from-[#a36262] to-[#8b5252]">
      {labels.map((b) => (
        <span key={b} className="w-[70.04px] shrink-0 text-[24px] leading-none tracking-[-1.4px] text-[#f8d8d0]">{b}</span>
      ))}
      <svg className="absolute left-0 top-0 h-[22px] w-[20px]" viewBox="0 0 20 22">
        <path d="M0 0H19L17 6 6 20 0 21Z" fill="#282f30" />
        <path d="M0 1H16L5 18 0 18Z" fill="#b7dc80" />
      </svg>
    </div>
  );
}

function ChannelPanel() {
  return (
    <div className="flex h-full w-[312px] shrink-0 flex-col">
      <div className="flex h-[83px] shrink-0 items-end justify-between bg-[#3e474d] pb-[14px] pl-[32px] pr-[58px]">
        <PianoIcon className="mb-[3px] h-[30px] w-[31px] text-[#4f595f]" />
        <WaveIcon className="h-[37px] w-[41px] text-[#dce4ea]" />
        <NodeIcon className="mb-[3px] h-[32px] w-[34px] text-[#4f595f]" />
      </div>
      <div className="flex min-h-0 flex-1 border-t-2 border-[#2a3339]">
        <div className="flex w-[281px] shrink-0 flex-col gap-[7px] overflow-hidden bg-[#2f3943] pl-[9px] pt-[5px]">
          {channels.map((c, i) => (
            <ChannelCell key={i} c={c} i={i} />
          ))}
        </div>
        <div className="flex w-[31px] flex-col bg-[#363f44] bg-[repeating-linear-gradient(45deg,#323b40_0,#323b40_2px,#3a4348_2px,#3a4348_4px)] px-[1px]">
          <DotButton className="h-[28px]" />
          <ArrowButton dir="up" className="mt-[3px] h-[27px]" />
          <div className="mt-[2px] h-[66px] border-2 border-[#5d676d] bg-[#4e585e]" />
          <ArrowButton dir="down" className="mt-auto h-[24px]" />
        </div>
      </div>
    </div>
  );
}

function Toolbar() {
  return (
    <div className="flex w-[224px] shrink-0 gap-[2px] pb-[2px] pl-[3px] pt-[4px]">
      <div className="flex w-[57px] items-end justify-center bg-[#4c565b] pb-[9px] pl-[4px] text-[38px] font-bold leading-none text-white [clip-path:polygon(38%_0,100%_0,100%_100%,0_100%,10%_70%)]">+</div>
      <div className="grid w-[160px] grid-cols-3 items-center justify-items-center border-2 border-[#626c71] bg-[#515b60] px-[4px]">
        <WaveIcon className="h-[30px] w-[36px] text-[#dde5ea]" />
        <NodeIcon className="h-[28px] w-[30px] text-[#6a747a]" />
        <PianoIcon className="h-[26px] w-[26px] text-[#6a747a]" />
        <svg className="h-[24px] w-[20px] text-[#e4eaee]" viewBox="0 0 20 24" fill="none" stroke="currentColor" strokeWidth="2.6">
          <path d="M2 1 18 23M18 1 2 23" />
        </svg>
        <svg className="h-[26px] w-[22px] text-[#78838a]" viewBox="0 0 22 26" fill="none" stroke="currentColor" strokeWidth="1.8">
          <path d="M20 1C14 1 12 4 11 10L9 19C8 23 6 25 2 25" />
          <path d="M2 16 20 6" />
        </svg>
        <svg className="h-[16px] w-[24px] text-[#8b969c]" viewBox="0 0 24 16" fill="currentColor">
          <path d="M0 8 7 0V5L9 8 7 11V16ZM24 8 17 0V5L15 8 17 11V16Z" />
          <rect x="11" y="0" width="2" height="16" />
        </svg>
      </div>
    </div>
  );
}

export default function App() {
  return (
    <div className="flex h-[1448px] w-[2880px] overflow-hidden bg-[#3d474c] font-['Roboto',sans-serif] [font-stretch:75%]">
      <ChannelPanel />
      <div className="w-[10px] shrink-0" />
      <div className="flex min-w-0 flex-1 flex-col">
        <div className="flex h-[84px] shrink-0">
          <Toolbar />
          <div className="flex min-w-0 flex-1 flex-col pt-[4px]">
            <div className="flex h-[40px] gap-[2px]">
              <ArrowButton dir="left" className="h-[38px] w-[38px]" />
              <Overview />
              <div className="flex-1" />
              <ArrowButton dir="right" className="h-[38px] w-[38px]" />
            </div>
            <Ruler />
          </div>
        </div>
        {tracks.map((t, i) => (
          <TrackRow key={i} t={t} />
        ))}
      </div>
      <div className="flex w-[42px] shrink-0 flex-col bg-[repeating-linear-gradient(45deg,#323b40_0,#323b40_2px,#3a4348_2px,#3a4348_4px)] px-[2px] pt-[4px]">
        <DotButton className="h-[38px]" />
        <ArrowButton dir="up" className="mt-[3px] h-[37px]" />
        <div className="mt-[17px] h-[66px] border-2 border-[#5d676d] bg-[#4e585e]" />
      </div>
    </div>
  );
}
